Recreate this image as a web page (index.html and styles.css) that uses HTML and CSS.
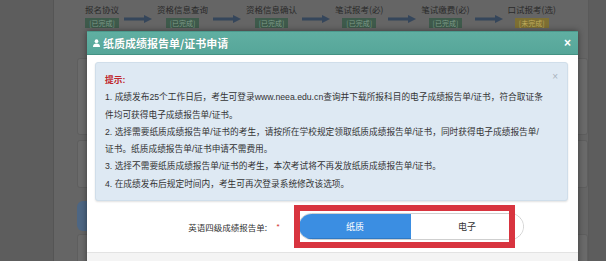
FILE: index.html
```html
<!DOCTYPE html>
<html lang="zh-CN">
<head>
<meta charset="utf-8">
<title>纸质成绩报告单/证书申请</title>
<link rel="stylesheet" href="styles.css">
</head>
<body>
<div class="page">
  <div class="steps">
    <div class="step"><span class="step-label">报名协议</span><span class="badge">[已完成]</span></div>
    <svg class="arrow" viewBox="0 0 28 10"><path d="M0 5H21" /><polygon points="20,1 28,5 20,9" /></svg>
    <div class="step"><span class="step-label">资格信息查询</span><span class="badge">[已完成]</span></div>
    <svg class="arrow" viewBox="0 0 28 10"><path d="M0 5H21" /><polygon points="20,1 28,5 20,9" /></svg>
    <div class="step"><span class="step-label">资格信息确认</span><span class="badge">[已完成]</span></div>
    <svg class="arrow" viewBox="0 0 28 10"><path d="M0 5H21" /><polygon points="20,1 28,5 20,9" /></svg>
    <div class="step"><span class="step-label">笔试报考(必)</span><span class="badge">[已完成]</span></div>
    <svg class="arrow" viewBox="0 0 28 10"><path d="M0 5H21" /><polygon points="20,1 28,5 20,9" /></svg>
    <div class="step"><span class="step-label">笔试缴费(必)</span><span class="badge">[已完成]</span></div>
    <svg class="arrow" viewBox="0 0 28 10"><path d="M0 5H21" /><polygon points="20,1 28,5 20,9" /></svg>
    <div class="step"><span class="step-label">口试报考(选)</span><span class="badge badge-pending">[未完成]</span></div>
  </div>
  <div class="content">
    <div class="panel panel-a"></div>
    <div class="panel panel-b"></div>
    <div class="blue-btn"></div>
    <div class="panel panel-c"></div>
  </div>
</div>

<div class="modal">
  <div class="modal-header">
    <svg class="user-icon" viewBox="0 0 8 9"><circle cx="4" cy="2.4" r="2.1"/><path d="M0 9C0 6 1.6 5 4 5S8 6 8 9Z"/></svg>
    <span class="modal-title">纸质成绩报告单/证书申请</span>
    <span class="modal-close">×</span>
  </div>
  <div class="modal-body">
    <div class="alert">
      <span class="alert-close">×</span>
      <p class="tip-title">提示:</p>
      <p>1. 成绩发布25个工作日后，考生可登录www.neea.edu.cn查询并下载所报科目的电子成绩报告单/证书，符合取证条<br>件均可获得电子成绩报告单/证书。</p>
      <p>2. 选择需要纸质成绩报告单/证书的考生，请按所在学校规定领取纸质成绩报告单/证书，同时获得电子成绩报告单/<br>证书。纸质成绩报告单/证书申请不需费用。</p>
      <p>3. 选择不需要纸质成绩报告单/证书的考生，本次考试将不再发放纸质成绩报告单/证书。</p>
      <p>4. 在成绩发布后规定时间内，考生可再次登录系统修改该选项。</p>
    </div>
    <div class="form-row">
      <label class="form-label">英语四级成绩报告单:</label>
      <span class="required">*</span>
      <div class="toggle-wrap">
        <div class="toggle">
          <span class="opt opt-active">纸质</span>
          <span class="opt">电子</span>
        </div>
        <div class="highlight"></div>
      </div>
    </div>
  </div>
  <div class="modal-footer"></div>
</div>
</body>
</html>
```

FILE: styles.css
```css
* { box-sizing: border-box; }

html, body {
  margin: 0;
  padding: 0;
}

body {
  width: 606px;
  height: 261px;
  overflow: hidden;
  background: #5d5d5d;
  font-family: "Liberation Sans", "Noto Sans CJK SC", sans-serif;
  position: relative;
}

.page {
  margin-left: 53px;
  width: 536px;
  height: 261px;
  background: #656565;
  border-left: 1px solid #555;
  border-right: 1px solid #5a5a5a;
}

.steps {
  display: flex;
  align-items: flex-start;
  gap: 5px;
  padding: 3px 0 0 31px;
  height: 31px;
}

.step {
  display: flex;
  flex-direction: column;
  align-items: center;
}

.step-label {
  font-family: "Noto Sans CJK SC", sans-serif;
  font-size: 8.5px;
  line-height: 12px;
  color: #2a2a2a;
  white-space: nowrap;
}

.badge {
  margin-top: 3px;
  height: 10px;
  line-height: 10px;
  padding: 0 4px;
  font-family: "Noto Sans CJK SC", sans-serif;
  font-size: 7px;
  color: #7d9c89;
  background: #3e5a4b;
  white-space: nowrap;
}

.badge-pending {
  color: #c0ac5c;
  background: #7d6f33;
}

.arrow {
  width: 28px;
  height: 10px;
  margin-top: 11px;
  flex: none;
}

.arrow path {
  stroke: #35465b;
  stroke-width: 3;
  fill: none;
}

.arrow polygon {
  fill: #35465b;
}

.content {
  margin-left: 23px;
  padding-top: 27px;
  display: flex;
  flex-direction: column;
}

.panel {
  background: #6a6a6a;
  border: 1px solid #5e5e5e;
  border-radius: 3px;
}

.panel-a { height: 77px; }
.panel-b { height: 48px; margin-top: 5px; }
.panel-c { height: 40px; margin-top: 3px; }

.blue-btn {
  width: 60px;
  height: 30px;
  margin-top: 13px;
  background: #4d6683;
  border-radius: 6px;
}

/* modal overlay */
.modal {
  position: absolute;
  left: 87px;
  top: 31px;
  width: 491px;
  background: #fff;
  box-shadow: 0 0 6px rgba(0, 0, 0, 0.45);
}

.modal-header {
  height: 24px;
  display: flex;
  align-items: center;
  padding: 0 7px 0 6px;
  background: linear-gradient(#60afa2, #56a699);
  border-bottom: 1px solid #449283;
  border-top: 1px solid #4b9a8d;
}

.user-icon {
  width: 7px;
  height: 8px;
  fill: #fff;
  margin-right: 3px;
  flex: none;
}

.modal-title {
  font-family: "Noto Sans CJK SC", sans-serif;
  font-size: 11px;
  font-weight: bold;
  color: #fff;
  flex: 1;
  text-shadow: 0 0 1px rgba(0, 0, 0, 0.2);
}

.modal-close {
  color: #fff;
  font-size: 12px;
  font-weight: bold;
  line-height: 1;
}

.modal-body {
  padding: 7px 10px 0 8px;
}

.alert {
  height: 139px;
  padding: 9px 18px 0 9px;
  background: #dee9f3;
  border: 1px solid #d0deea;
  border-radius: 3px;
  box-shadow: 0 1px 2px rgba(0, 0, 0, 0.12);
  color: #333;
  font-size: 8.7px;
  line-height: 17.3px;
}

.alert p {
  margin: 0;
  white-space: nowrap;
}

.alert-close {
  float: right;
  margin-right: -9px;
  margin-top: -4px;
  font-size: 10px;
  color: #a9b3bd;
}

.tip-title {
  color: #c0262c;
  font-weight: bold;
}

.form-row {
  height: 51px;
  display: flex;
  align-items: center;
}

.form-label {
  width: 172px;
  text-align: right;
  font-family: "Noto Sans CJK SC", sans-serif;
  font-size: 8.5px;
  color: #333;
}

.required {
  width: 10px;
  margin-left: 6px;
  text-align: center;
  color: #d02a2a;
  font-size: 8px;
}

.toggle-wrap {
  position: relative;
  margin-left: 15px;
}

.toggle {
  display: flex;
  width: 226px;
  height: 27px;
  border: 1px solid #cfcfcf;
  border-radius: 14px;
  overflow: hidden;
}

.opt {
  flex: 1;
  display: flex;
  align-items: center;
  justify-content: center;
  font-family: "Noto Sans CJK SC", sans-serif;
  font-size: 9px;
  color: #333;
  background: #fff;
}

.opt-active {
  color: #fff;
  background: #3b8ee2;
  border-bottom: 1px solid #2f79c4;
}

.highlight {
  position: absolute;
  left: -4px;
  top: -8px;
  width: 221px;
  height: 43px;
  border: 6px solid #d8343f;
}

.modal-footer {
  height: 20px;
  background: #f4f4f4;
  border-top: 1px solid #e3e3e3;
}
```
